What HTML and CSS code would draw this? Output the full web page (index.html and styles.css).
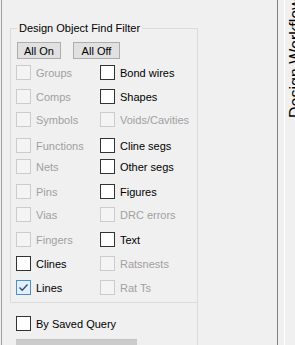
FILE: index.html
```html
<!DOCTYPE html>
<html lang="en">

<head>
    <meta charset="UTF-8">
    <title>Find Filter</title>
    <link rel="stylesheet" href="styles.css">
</head>

<body>
    <div class="window">
        <div class="edge"></div>
        <div class="panel">
            <div class="area">
                <div class="filter">
                    <span class="filter-title">Design Object Find Filter</span>
                    <div class="buttons">
                        <button class="btn btn-on">All On</button>
                        <button class="btn btn-off">All Off</button>
                    </div>
                    <div class="grid">
                        <label class="item off"><span class="box"></span>Groups</label>
                        <label class="item"><span class="box"></span>Bond wires</label>
                        <label class="item off"><span class="box"></span>Comps</label>
                        <label class="item"><span class="box"></span>Shapes</label>
                        <label class="item off"><span class="box"></span>Symbols</label>
                        <label class="item off"><span class="box"></span>Voids/Cavities</label>
                        <label class="item off"><span class="box"></span>Functions</label>
                        <label class="item"><span class="box"></span>Cline segs</label>
                        <label class="item off"><span class="box"></span>Nets</label>
                        <label class="item"><span class="box"></span>Other segs</label>
                        <label class="item off"><span class="box"></span>Pins</label>
                        <label class="item"><span class="box"></span>Figures</label>
                        <label class="item off"><span class="box"></span>Vias</label>
                        <label class="item off"><span class="box"></span>DRC errors</label>
                        <label class="item off"><span class="box"></span>Fingers</label>
                        <label class="item"><span class="box"></span>Text</label>
                        <label class="item"><span class="box"></span>Clines</label>
                        <label class="item off"><span class="box"></span>Ratsnests</label>
                        <label class="item"><span class="box checked"><svg width="13" height="13" viewBox="0 0 13 13"><polyline points="2.5,6.5 5.2,9.3 10.5,3.5" fill="none" stroke="#2d4d6c" stroke-width="1.3"/></svg></span>Lines</label>
                        <label class="item off"><span class="box"></span>Rat Ts</label>
                    </div>
                </div>
                <label class="item query"><span class="box"></span>By Saved Query</label>
                <div class="combo"></div>
            </div>
        </div>
        <div class="divider"></div>
        <div class="hilite"></div>
        <div class="tab"><span class="tab-text">Design Workflow</span></div>
    </div>
</body>

</html>
```

FILE: styles.css
```css
body {
    margin: 0;
    width: 295px;
    height: 345px;
    overflow: hidden;
    background-color: #f0f0f0;
    font-family: "Liberation Sans", Arial, sans-serif;
    font-size: 11px;
    color: #000;
}

.window {
    display: flex;
    width: 320px;
    height: 345px;
}

.window > div {
    flex-shrink: 0;
}

.edge {
    width: 1px;
    margin-left: 1px;
    background-color: #a0a0a0;
}

.panel {
    width: 275px;
}

.area {
    margin-top: 28px;
    margin-left: 8px;
    width: 187px;
    height: 317px;
    border-right: 1px solid #dcdcdc;
}

.filter {
    position: relative;
    height: 273px;
    border: 1px solid #dcdcdc;
    border-right: none;
    padding-left: 5px;
}

.filter-title {
    position: absolute;
    top: -7px;
    left: 6px;
    padding: 0 2px;
    background-color: #f0f0f0;
    line-height: 13px;
}

.buttons {
    display: flex;
    gap: 12px;
    padding-top: 13px;
    padding-left: 1px;
}

.btn {
    height: 17px;
    padding: 0;
    border: 1px solid #adadad;
    background-color: #e1e1e1;
    font-family: inherit;
    font-size: 11px;
    color: #000;
}

.btn-on {
    width: 44px;
}

.btn-off {
    width: 47px;
}

.grid {
    display: grid;
    grid-template-columns: 84px 1fr;
    grid-template-rows: 24px 23px 26px 21px 25px 23px 25px 24px 24px 24px;
    margin-top: 6px;
}

.item {
    display: flex;
    align-items: center;
    height: 15px;
    white-space: nowrap;
}

.box {
    box-sizing: border-box;
    display: flex;
    align-items: center;
    justify-content: center;
    width: 15px;
    height: 15px;
    margin-right: 5px;
    border: 1px solid #333;
    background-color: #fff;
}

.item.off {
    color: #a0a0a0;
}

.item.off .box {
    border-color: #cccccc;
    background-color: #f4f4f4;
}

.box.checked {
    border-color: #4d8fcc;
    background-color: #e3effa;
}

.query {
    margin-top: 13px;
    margin-left: 6px;
}

.combo {
    margin-top: 8px;
    margin-left: 6px;
    width: 121px;
    height: 10px;
    border-top: 1px solid #c4c4c4;
    background-color: #cccccc;
}

.divider {
    width: 1px;
    background-color: #808080;
}

.hilite {
    width: 1px;
    margin-left: 6px;
    background-color: #ffffff;
}

.tab {
    width: 24px;
    padding-left: 2px;
}

.tab-text {
    display: block;
    width: 18px;
    height: 118px;
    writing-mode: vertical-rl;
    transform: rotate(180deg);
    font-size: 16px;
    line-height: 18px;
    white-space: nowrap;
}
```
